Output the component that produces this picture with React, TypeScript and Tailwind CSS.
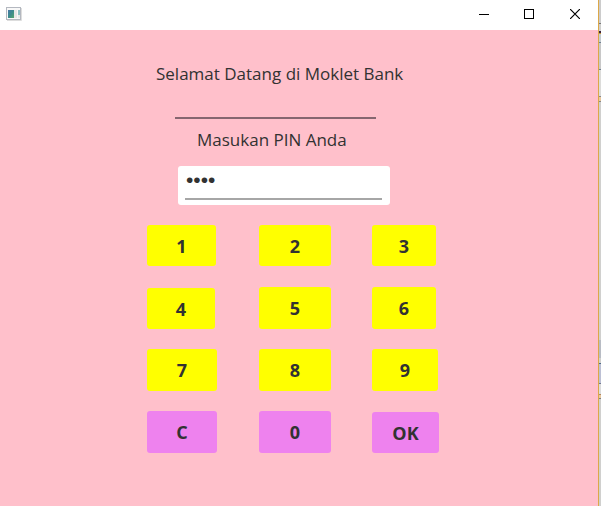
import { useState } from "react";

type Key = { label: string; size: string };

const keys: Key[] = [
  { label: "1", size: "h-[41px] w-[69px]" },
  { label: "2", size: "h-[41px] w-[72px]" },
  { label: "3", size: "h-[41px] w-16" },
  { label: "4", size: "h-[41px] w-[68px] self-end" },
  { label: "5", size: "h-[42px] w-[72px]" },
  { label: "6", size: "h-[42px] w-16" },
  { label: "7", size: "h-[42px] w-[70px]" },
  { label: "8", size: "h-[42px] w-[72px]" },
  { label: "9", size: "h-[42px] w-[66px]" },
  { label: "C", size: "h-[42px] w-[70px]" },
  { label: "0", size: "h-[42px] w-[72px]" },
  { label: "OK", size: "h-[41px] w-[67px] self-end" },
];

function TitleBar() {
  return (
    <header className="flex h-[30px] items-start justify-between bg-white">
      <svg className="mt-[7px] ml-[6px]" width="16" height="14" viewBox="0 0 16 14" aria-hidden="true">
        <defs>
          <linearGradient id="pane" x1="0" y1="0" x2="1" y2="1">
            <stop offset="0" stopColor="#4878a8" />
            <stop offset="0.5" stopColor="#3b8a8c" />
            <stop offset="1" stopColor="#55a66c" />
          </linearGradient>
        </defs>
        <rect x="0.5" y="0.5" width="14" height="12" fill="#f8f8f8" stroke="#b4b8c0" />
        <path d="M1 13.5h14.5V1" fill="none" stroke="#dddddd" />
        <rect x="2" y="3" width="6" height="8" fill="url(#pane)" />
        <rect x="8" y="3" width="3" height="8" fill="#e6e6e6" />
        <rect x="12" y="3" width="2" height="5" fill="#8fc0c4" />
        <rect x="12" y="8" width="2" height="3" fill="#e8e8e8" />
      </svg>
      <div className="flex h-7">
        <button type="button" aria-label="Minimize" className="flex w-[45px] items-center justify-center">
          <svg width="10" height="11" viewBox="0 0 10 11" stroke="#000">
            <path d="M0 5.5h10" />
          </svg>
        </button>
        <button type="button" aria-label="Maximize" className="flex w-[46px] items-center justify-center">
          <svg width="10" height="10" viewBox="0 0 10 10" fill="none" stroke="#000">
            <rect x="0.5" y="0.5" width="9" height="9" />
          </svg>
        </button>
        <button type="button" aria-label="Close" className="flex w-[46px] items-center justify-center">
          <svg width="10" height="10" viewBox="0 0 10 10" stroke="#000" strokeWidth="1.2">
            <path d="M0 0l10 10M10 0L0 10" />
          </svg>
        </button>
      </div>
    </header>
  );
}

function DesktopEdge() {
  return (
    <div aria-hidden="true" className="flex w-[2px] flex-col bg-[#d0d0ce]">
      <div className="h-[23px] bg-[#cccccc]" />
      <div className="h-px bg-[#777777]" />
      <div className="h-[7px]" />
      <div className="h-[2px] bg-[#3b1f3b]" />
      <div className="h-px bg-[#c89838]" />
      <div className="h-2 bg-[#c4ccd0]" />
      <div className="h-px bg-[#708090]" />
      <div className="h-[26px] bg-[#c8c8c8]" />
      <div className="h-px bg-[#708090]" />
      <div className="h-[26px] bg-[#dcdcda]" />
      <div className="h-px bg-[#888888]" />
      <div className="h-1 bg-[#e8c8a0]" />
      <div className="h-px bg-[#888888]" />
      <div className="h-[238px]" />
      <div className="h-[18px] bg-[#b8bcc4]" />
      <div className="h-[5px]" />
      <div className="h-px bg-[#4d6884]" />
      <div className="h-[19px] bg-[#bcc0d4]" />
      <div className="h-px bg-[#707890]" />
      <div className="h-[10px] bg-[#dcdcdc]" />
      <div className="h-px bg-[#b08860]" />
      <div className="h-[3px] bg-[#e8c8a0]" />
      <div className="h-px bg-[#808080]" />
    </div>
  );
}

export default function App() {
  const [pin, setPin] = useState("1234");

  const press = (label: string) => {
    if (label === "C") setPin("");
    else if (label !== "OK") setPin(pin + label);
  };

  return (
    <div className="flex min-h-screen font-['Open_Sans','Noto_Sans',sans-serif] text-[#323232]">
      <div className="flex grow flex-col border-r border-[#dca848] bg-[#ffc0cb]">
        <TitleBar />
        <main className="flex flex-col items-start pt-8 pl-[147px]">
          <h1 className="ml-[9px] text-[17px] leading-6">Selamat Datang di Moklet Bank</h1>
          <input
            type="text"
            readOnly
            aria-label="Status"
            className="ml-7 h-[33px] w-[201px] border-b-2 border-[#866670] outline-none"
          />
          <label htmlFor="pin" className="mt-[9px] ml-[50px] text-[17px] leading-6">
            Masukan PIN Anda
          </label>
          <div className="mt-[14px] ml-[31px] h-[39px] w-[212px] rounded-[3px] bg-white pl-[7px]">
            <input
              id="pin"
              type="password"
              value={pin}
              onChange={(e) => setPin(e.target.value)}
              className="block h-[34px] w-[197px] border-b-2 border-[#a6a6a6] pb-1 pl-px font-['Liberation_Sans',sans-serif] text-[21px] outline-none"
            />
          </div>
          <div className="mt-5 grid auto-rows-[42px] grid-cols-[112px_113px_67px] gap-y-5">
            {keys.map(({ label, size }) => (
              <button
                key={label}
                type="button"
                onClick={() => press(label)}
                className={`${size} rounded-[3px] text-lg leading-6 font-bold ${
                  label === "C" || label === "0" || label === "OK" ? "bg-[#ee82ee]" : "bg-[#ffff00]"
                }`}
              >
                {label}
              </button>
            ))}
          </div>
        </main>
      </div>
      <DesktopEdge />
    </div>
  );
}
